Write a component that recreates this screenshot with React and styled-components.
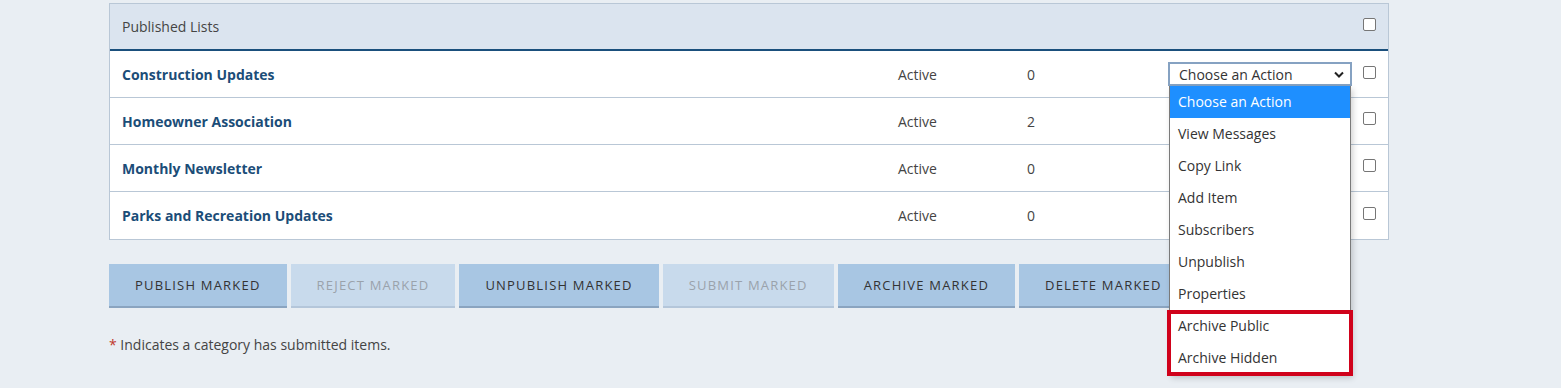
import React from "react";
import styled, { createGlobalStyle } from "styled-components";

const GlobalStyle = createGlobalStyle`
  html, body {
    margin: 0;
    min-height: 100%;
  }
  body {
    background: #e9eef3;
    font-family: "Open Sans", "Liberation Sans", sans-serif;
    color: #444;
  }
`;

const lists = [
  { name: "Construction Updates", status: "Active", count: 0, open: true },
  { name: "Homeowner Association", status: "Active", count: 2 },
  { name: "Monthly Newsletter", status: "Active", count: 0 },
  { name: "Parks and Recreation Updates", status: "Active", count: 0 },
];

const actions = [
  "Choose an Action",
  "View Messages",
  "Copy Link",
  "Add Item",
  "Subscribers",
  "Unpublish",
  "Properties",
  "Archive Public",
  "Archive Hidden",
];

const buttons = [
  { label: "Publish Marked" },
  { label: "Reject Marked", disabled: true },
  { label: "Unpublish Marked" },
  { label: "Submit Marked", disabled: true },
  { label: "Archive Marked" },
  { label: "Delete Marked" },
];

const Page = styled.div`
  box-sizing: border-box;
  min-height: 100vh;
  padding: 3px 0 0 109px;
  width: 1389px;
`;

const Table = styled.div`
  border: 1px solid #b9c7d6;
  background: #fff;
`;

const Header = styled.div`
  display: flex;
  align-items: center;
  height: 45px;
  padding: 0 12px;
  background: #dbe4ef;
  border-bottom: 2px solid #1a4f7c;
  font-size: 14px;
  color: #444;
`;

const Row = styled.div`
  display: flex;
  align-items: center;
  height: ${(p) => (p.last ? 47 : 46)}px;
  padding: 0 12px;
  font-size: 14px;
  border-bottom: ${(p) => (p.last ? "none" : "1px solid #b9c7d6")};
`;

const Title = styled.div`
  flex: 1;
`;

const Name = styled.a`
  flex: 1;
  font-weight: 700;
  color: #1b4d78;
  text-decoration: none;
`;

const Cell = styled.div`
  width: ${(p) => p.w}px;
`;

const ActionCell = styled.div`
  position: relative;
  width: 184px;
  height: 24px;
`;

const SelectBox = styled.div`
  display: flex;
  align-items: center;
  justify-content: space-between;
  box-sizing: border-box;
  height: 24px;
  padding: 0 6px 0 9px;
  border: 2px solid #86a2c2;
  background: #fff;
  color: #333;
  font-size: 14px;
`;

const Menu = styled.ul`
  position: absolute;
  top: 24px;
  left: 1px;
  width: 182px;
  box-sizing: border-box;
  margin: 0;
  padding: 0;
  list-style: none;
  background: #fff;
  border: 1px solid #7a7a7a;
  border-top: none;
  box-shadow: 2px 3px 6px rgba(0, 0, 0, 0.18);
  z-index: 2;
`;

const MenuItem = styled.li`
  height: 32px;
  line-height: 32px;
  padding-left: 8px;
  font-size: 14px;
  color: ${(p) => (p.active ? "#fff" : "#333")};
  background: ${(p) => (p.active ? "#1e8fff" : "transparent")};
`;

const Highlight = styled.div`
  position: absolute;
  left: -1px;
  top: 248px;
  width: 186px;
  height: 66px;
  box-sizing: border-box;
  border: 4px solid #d0021b;
  pointer-events: none;
  z-index: 3;
`;

const Check = styled.span`
  display: inline-block;
  width: 11px;
  height: 11px;
  margin-left: 11px;
  border: 1px solid #767676;
  border-radius: 2px;
  background: #fff;
  margin-top: ${(p) => p.offset || 0}px;
`;

const ButtonBar = styled.div`
  display: flex;
  gap: 4px;
  margin-top: 24px;
`;

const Button = styled.button`
  height: 44px;
  padding: 0 26px;
  border: none;
  border-bottom: 2px solid ${(p) => (p.disabled ? "#b4c6da" : "#8aa4c0")};
  background: ${(p) => (p.disabled ? "#c8daec" : "#a8c6e3")};
  color: ${(p) => (p.disabled ? "#9aa2ab" : "#333")};
  font-family: "Open Sans", "Liberation Sans", sans-serif;
  font-size: 13px;
  letter-spacing: 1.2px;
  text-transform: uppercase;
`;

const Note = styled.p`
  margin: 27px 0 0;
  font-size: 14px;
  color: #444;
`;

const Star = styled.span`
  color: #c0392b;
`;

const Chevron = () => (
  <svg width="10" height="7" viewBox="0 0 10 7">
    <path d="M1 1.5 L5 5.5 L9 1.5" fill="none" stroke="#222" strokeWidth="2" />
  </svg>
);

export default function App() {
  return (
    <Page>
      <GlobalStyle />
      <Table>
        <Header>
          <Title>Published Lists</Title>
          <Check offset={-4} />
        </Header>
        {lists.map((l, i) => (
          <Row key={l.name} last={i === lists.length - 1}>
            <Name href="#">{l.name}</Name>
            <Cell w={129}>{l.status}</Cell>
            <Cell w={141}>{l.count}</Cell>
            {l.open ? (
              <ActionCell>
                <SelectBox>
                  Choose an Action
                  <Chevron />
                </SelectBox>
                <Menu>
                  {actions.map((a, j) => (
                    <MenuItem key={a} active={j === 0}>
                      {a}
                    </MenuItem>
                  ))}
                </Menu>
                <Highlight />
              </ActionCell>
            ) : (
              <Cell w={184} />
            )}
            <Check offset={l.open ? -4 : -5} />
          </Row>
        ))}
      </Table>
      <ButtonBar>
        {buttons.map((b) => (
          <Button key={b.label} disabled={b.disabled}>
            {b.label}
          </Button>
        ))}
      </ButtonBar>
      <Note>
        <Star>*</Star> Indicates a category has submitted items.
      </Note>
    </Page>
  );
}
